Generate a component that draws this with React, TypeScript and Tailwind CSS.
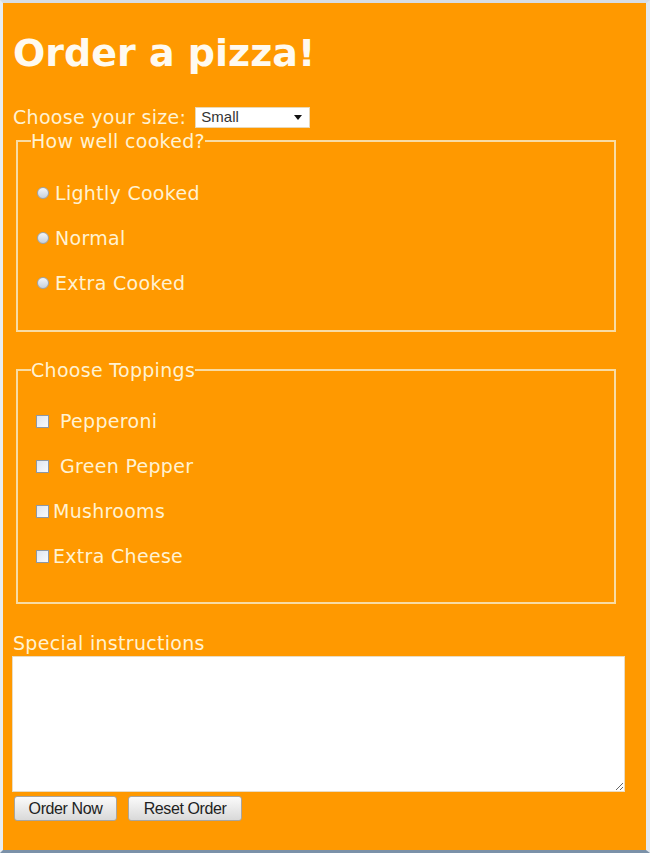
import React from "react";

const labelFont = "font-['DejaVu_Sans',Verdana,sans-serif]";

function Radio({ label }: { label: string }) {
    return (
        <label className="flex items-center h-[22px] leading-[22px]">
            <span className="w-[12px] h-[12px] rounded-full border border-[#9aa4b0] bg-linear-to-b from-[#f4f6fa] to-[#c6d0dc] shrink-0" />
            <span className="ml-[6px]">{label}</span>
        </label>
    );
}

function Check({ label, spaced = false }: { label: string; spaced?: boolean }) {
    return (
        <label className="flex items-center h-[22px] leading-[22px]">
            <span className="w-[13px] h-[13px] border border-[#8e98a4] bg-linear-to-br from-[#dfe5ee] to-[#f8fafc] shrink-0" />
            <span className={spaced ? "ml-[11px]" : "ml-[4px]"}>{label}</span>
        </label>
    );
}

function Button({ children, width }: { children: React.ReactNode; width: string }) {
    return (
        <button
            className={`${width} h-[25px] rounded-[3px] border border-[#a9a59e] bg-linear-to-b from-[#fbfbfb] to-[#d9d9d9] text-[16px] tracking-[-0.4px] text-[#222] font-['Liberation_Sans',Arial,sans-serif] leading-[23px]`}
        >
            {children}
        </button>
    );
}

export default function App() {
    return (
        <div className="w-[650px] h-[853px] bg-[#e4eaf0] border-t-[3px] border-l-[3px] border-r-[4px] border-b-[3px] border-t-[#d7dee6] border-l-[#e8edf2] border-r-[#e3e9ef] border-b-[#7b91a8] box-border">
            <div className={`h-full bg-[#ff9900] pl-[10px] pt-[28px] text-[19px] tracking-[0.3px] text-[#fff2d2] ${labelFont}`}>
                <h1 className="text-[38px] leading-[44px] font-bold tracking-normal text-[#fffaf0]">Order a pizza!</h1>

                {/* size */}
                <div className="mt-[31px] h-[22px] flex items-center leading-[22px]">
                    <span>Choose your size:</span>
                    <div className="ml-[9px] w-[115px] h-[21px] bg-white border border-[#e8d8b8] flex items-center justify-between pl-[5px] pr-[7px]">
                        <span className="text-[15px] tracking-normal text-[#333] font-['Liberation_Sans',Arial,sans-serif]">Small</span>
                        <span className="w-0 h-0 border-l-[4px] border-r-[4px] border-t-[5px] border-l-transparent border-r-transparent border-t-[#111]" />
                    </div>
                </div>

                {/* cooking */}
                <fieldset className="mt-[2px] ml-[3px] w-[600px] border-2 border-[#f8dca4] pb-[36px]">
                    <legend className="ml-[13px] leading-[22px]">How well cooked?</legend>
                    <div className="mt-[30px] pl-[19px] flex flex-col gap-[23px]">
                        <Radio label="Lightly Cooked" />
                        <Radio label="Normal" />
                        <Radio label="Extra Cooked" />
                    </div>
                </fieldset>

                {/* toppings */}
                <fieldset className="mt-[27px] ml-[3px] w-[600px] border-2 border-[#f8dca4] pb-[35px]">
                    <legend className="ml-[13px] leading-[22px]">Choose Toppings</legend>
                    <div className="mt-[29px] pl-[18px] flex flex-col gap-[23px]">
                        <Check label="Pepperoni" spaced />
                        <Check label="Green Pepper" spaced />
                        <Check label="Mushrooms" />
                        <Check label="Extra Cheese" />
                    </div>
                </fieldset>

                <div className="mt-[28px] leading-[22px]">Special instructions</div>
                <textarea className="mt-[2px] -ml-px block w-[613px] h-[136px] bg-white border border-[#e9dcc2] resize outline-none" />

                <div className="mt-[4px] flex gap-[11px] pl-[1px]">
                    <Button width="w-[103px]">Order Now</Button>
                    <Button width="w-[114px]">Reset Order</Button>
                </div>
            </div>
        </div>
    );
}
